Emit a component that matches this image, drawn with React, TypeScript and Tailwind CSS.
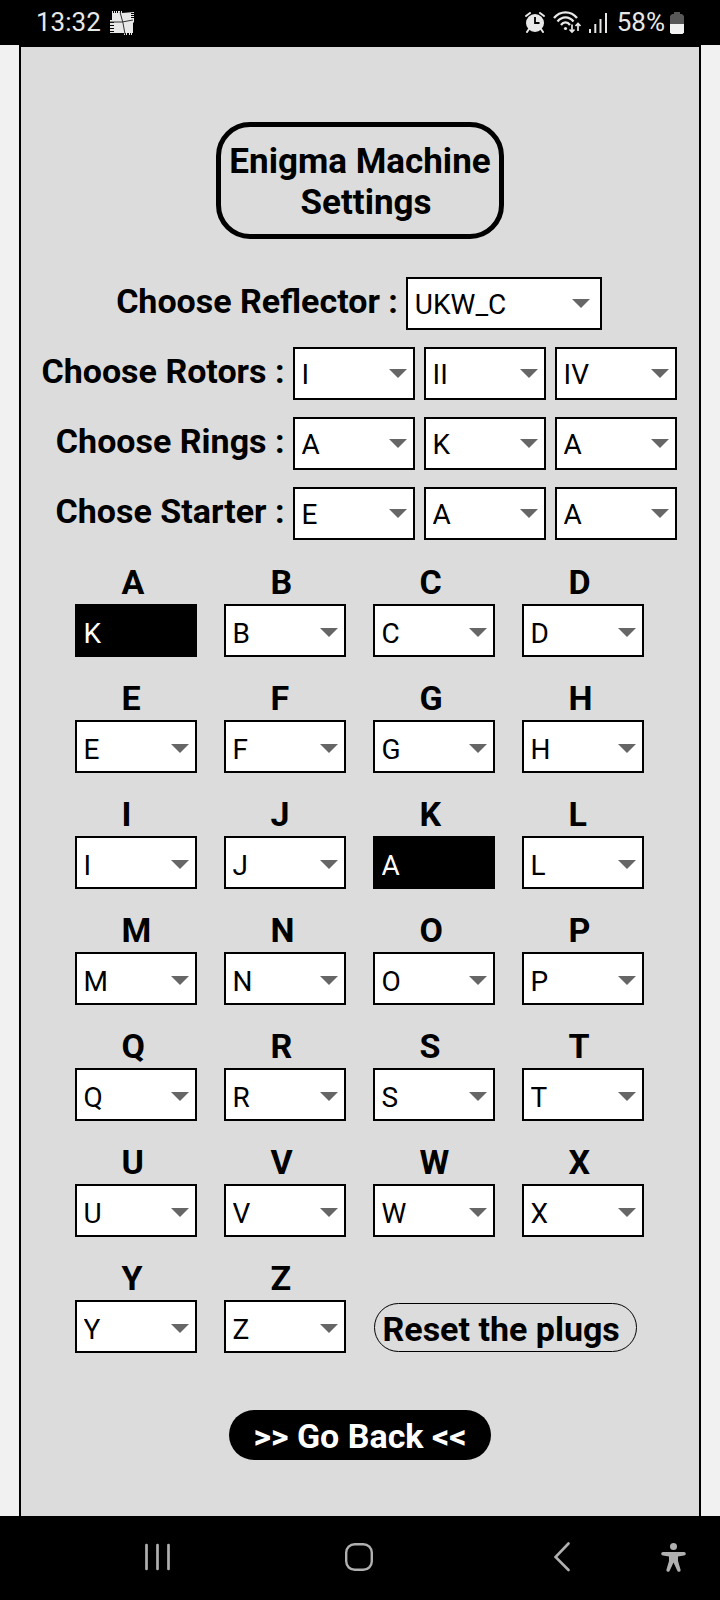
import { useState } from "react";

const ALPHABET = "ABCDEFGHIJKLMNOPQRSTUVWXYZ".split("");
const ROTORS = ["I", "II", "III", "IV", "V"];
const REFLECTORS = ["UKW_A", "UKW_B", "UKW_C"];

type PickerProps = {
  id: string;
  label?: string;
  options: string[];
  value: string;
  onChange: (value: string) => void;
  kind?: "setting" | "wide" | "plug";
  plugged?: boolean;
};

const SELECT_STYLE = {
  setting: "w-[122px] pt-0.5",
  wide: "w-[196px] pt-0.5",
  plug: "w-[122px] pt-1.5",
};

const ARROW_STYLE = {
  setting: "right-2 top-[22px]",
  wide: "right-3 top-[22px]",
  plug: "right-2 top-6",
};

function Picker({ id, label, options, value, onChange, kind = "setting", plugged }: PickerProps) {
  return (
    <div className="relative h-[53px]">
      <select
        id={id}
        aria-label={label}
        value={value}
        onChange={(e) => onChange(e.target.value)}
        className={`block h-full appearance-none rounded-none border-2 border-black pl-[7px] text-[28px] leading-8 ${
          SELECT_STYLE[kind]
        } ${plugged ? "bg-black text-white" : "bg-white text-black"}`}
      >
        {options.map((o) => (
          <option key={o} value={o}>
            {o}
          </option>
        ))}
      </select>
      {!plugged && (
        <svg
          viewBox="0 0 18 9"
          className={`pointer-events-none absolute h-[9px] w-[18px] ${ARROW_STYLE[kind]}`}
          aria-hidden="true"
        >
          <path d="M0 0h18L9 9z" fill="#666" />
        </svg>
      )}
    </div>
  );
}

type SettingRowProps = {
  name: string;
  label: string;
  options: string[];
  initial: string[];
  wide?: boolean;
};

function SettingRow({ name, label, options, initial, wide }: SettingRowProps) {
  const [values, setValues] = useState(initial);
  return (
    <div className={`flex items-center gap-2 ${wide ? "justify-center" : "justify-end"}`}>
      <label htmlFor={`${name}-0`} className="pb-1 text-[34px] leading-[41px] font-bold whitespace-nowrap">
        {label}
      </label>
      <div className="flex gap-[9px]">
        {values.map((v, i) => (
          <Picker
            key={i}
            id={`${name}-${i}`}
            label={i > 0 ? `${label} ${i + 1}` : undefined}
            options={options}
            value={v}
            kind={wide ? "wide" : "setting"}
            onChange={(next) => setValues(values.map((old, j) => (j === i ? next : old)))}
          />
        ))}
      </div>
    </div>
  );
}

function StatusBar() {
  return (
    <header className="flex h-[45px] items-center justify-between bg-black pr-9 pl-9 text-[26px] leading-[45px] text-[#e8e8e8]">
      <div className="flex items-center gap-[9px]">
        <span>13:32</span>
        <svg viewBox="0 0 24 24" className="h-6 w-6" aria-hidden="true">
          <path
            d="M2 0h1v2h1V0h1v2h1V0h1v2h1V0h2v2h1V0h1v2l12-1v1h-3v1h3v1h-3v1h3v1h-3v1h3v4l-1 1v10h-1v2h-1v-2h-1v2h-1v-2h-2v2h-1v-2h-1v2h-1v-2H0v-1h4v-1H0v-2h4v-1H0v-2h4v-1H0v-2h4v-1H0v-2h2z"
            fill="#e8e8e8"
          />
          <path d="M10 1l3 11 2 11M0 11h12l11-2" fill="none" stroke="#333" strokeWidth="1" />
        </svg>
      </div>
      <div className="flex items-center">
        <svg viewBox="0 0 20 21" className="mr-2 h-[21px] w-5" aria-hidden="true">
          <circle cx="10" cy="11" r="9" fill="#e8e8e8" />
          <path d="M4 17l-2 3M16 17l2 3M1 4l4-3M19 4l-4-3" stroke="#e8e8e8" strokeWidth="2" strokeLinecap="round" />
          <path d="M10 5v6h4.500" fill="none" stroke="#000" strokeWidth="1.800" />
        </svg>
        <svg viewBox="0 0 29 23" className="mr-[7px] h-[23px] w-[29px]" aria-hidden="true">
          <g fill="none" stroke="#e8e8e8" strokeWidth="2.300">
            <path d="M1 7C7-.5 18-.5 24 7" />
            <path d="M4.500 10.500C9 5 16 5 20.500 10.500" />
            <path d="M8 14C10.500 10.500 14.500 10.500 17 14" />
          </g>
          <circle cx="12.500" cy="17.500" r="1.600" fill="#e8e8e8" />
          <path d="M19 13.500v7M16.500 18.500L19 21l2.500-2.500M25 20v-7.500M22.500 15L25 12.500l2.500 2.500" fill="none" stroke="#e8e8e8" strokeWidth="1.700" />
        </svg>
        <svg viewBox="0 0 18 20" className="mr-2.5 h-5 w-[18px]" aria-hidden="true">
          <path d="M1 20v-4M6.300 20v-9M11.500 20V6M17 20V0" stroke="#e8e8e8" strokeWidth="2" />
        </svg>
        <span>58%</span>
        <svg viewBox="0 0 14 22" className="ml-[5px] h-[22px] w-3.5" aria-hidden="true">
          <path d="M4 0h6v2h2l2 2v8H0V4l2-2h2z" fill="#585858" />
          <path d="M0 12h14v8.500L12.500 22h-11L0 20.500z" fill="#f2f2f2" />
        </svg>
      </div>
    </header>
  );
}

function NavigationBar() {
  return (
    <nav className="grid h-[84px] grid-cols-[200fr_208fr_107fr_59fr] items-center bg-black pb-0.5 pl-[145px]">
      <button type="button" aria-label="Recent apps" className="w-[25px]">
        <svg viewBox="0 0 25 28" className="h-7 w-[25px]">
          <path d="M1.500 2v24M12.500 2v24M23.500 2v24" stroke="#b0b0b0" strokeWidth="2.700" strokeLinecap="round" />
        </svg>
      </button>
      <button type="button" aria-label="Home" className="w-7">
        <svg viewBox="0 0 28 28" className="h-7 w-7">
          <rect x="1.200" y="1.200" width="25.600" height="25.600" rx="8.500" fill="none" stroke="#b0b0b0" strokeWidth="2.400" />
        </svg>
      </button>
      <button type="button" aria-label="Back" className="w-4">
        <svg viewBox="0 0 16 30" className="h-[30px] w-4">
          <path d="M14.500 1.500L1.500 15l13 13" fill="none" stroke="#b0b0b0" strokeWidth="2.600" strokeLinecap="round" />
        </svg>
      </button>
      <button type="button" aria-label="Accessibility" className="w-[25px]">
        <svg viewBox="0 0 25 30" className="h-[30px] w-[25px]">
          <circle cx="12.500" cy="4.500" r="3.500" fill="#b0b0b0" />
          <path
            d="M2 10h21a1.800 1.800 0 0 1 0 3.600l-6 .8v4.500l2.500 8.600a1.700 1.700 0 0 1-3.300 1L12.500 20.500l-3.700 8a1.700 1.700 0 0 1-3.300-1L8 18.900v-4.500l-6-.8A1.800 1.800 0 0 1 2 10z"
            fill="#b0b0b0"
          />
        </svg>
      </button>
    </nav>
  );
}

export default function App() {
  const [plugs, setPlugs] = useState<Record<string, string>>({ A: "K", K: "A" });

  const connect = (from: string, to: string) => {
    const next = { ...plugs };
    for (const letter of [from, to]) {
      const partner = next[letter];
      if (partner) {
        delete next[partner];
        delete next[letter];
      }
    }
    if (from !== to) {
      next[from] = to;
      next[to] = from;
    }
    setPlugs(next);
  };

  return (
    <div className="flex min-h-screen flex-col bg-[#f1f1f1] font-['Roboto',sans-serif] text-black">
      <StatusBar />
      <main className="mx-[19px] flex flex-1 flex-col items-center border-x-2 border-t-2 border-black bg-[#dcdcdc] pt-[75px] pb-14">
        <h1 className="w-[288px] rounded-[34px] border-5 border-black pt-3.5 pb-[11px] text-center text-[35px] leading-[41px] font-bold">
          Enigma Machine
          <span className="block pl-3">Settings</span>
        </h1>

        <section className="mt-[38px] flex flex-col gap-[17px] pr-0.5">
          <SettingRow name="reflector" label="Choose Reflector :" options={REFLECTORS} initial={["UKW_C"]} wide />
          <SettingRow name="rotor" label="Choose Rotors :" options={ROTORS} initial={["I", "II", "IV"]} />
          <SettingRow name="ring" label="Choose Rings :" options={ALPHABET} initial={["A", "K", "A"]} />
          <SettingRow name="starter" label="Chose Starter :" options={ALPHABET} initial={["E", "A", "A"]} />
        </section>

        <section className="mt-[22px] grid grid-cols-4 gap-x-[27px] gap-y-[21px] pr-0.5">
          {ALPHABET.map((letter) => (
            <div key={letter}>
              <label htmlFor={`plug-${letter}`} className="block h-[42px] pl-[47px] text-[34px] leading-[41px] font-bold">
                {letter}
              </label>
              <Picker
                id={`plug-${letter}`}
                options={ALPHABET}
                value={plugs[letter] ?? letter}
                kind="plug"
                plugged={letter in plugs}
                onChange={(to) => connect(letter, to)}
              />
            </div>
          ))}
          <button
            type="button"
            onClick={() => setPlugs({})}
            className="col-span-2 mb-px ml-px h-[49px] w-[263px] self-end rounded-full border border-black pt-1 pl-2 text-left text-[34px] leading-[41px] font-bold"
          >
            Reset the plugs
          </button>
        </section>

        <button
          type="button"
          className="mt-[57px] h-[50px] w-[262px] rounded-full bg-black pt-0.5 text-[34px] leading-[41px] font-bold text-white"
        >
          &gt;&gt; Go Back &lt;&lt;
        </button>
      </main>
      <NavigationBar />
    </div>
  );
}
